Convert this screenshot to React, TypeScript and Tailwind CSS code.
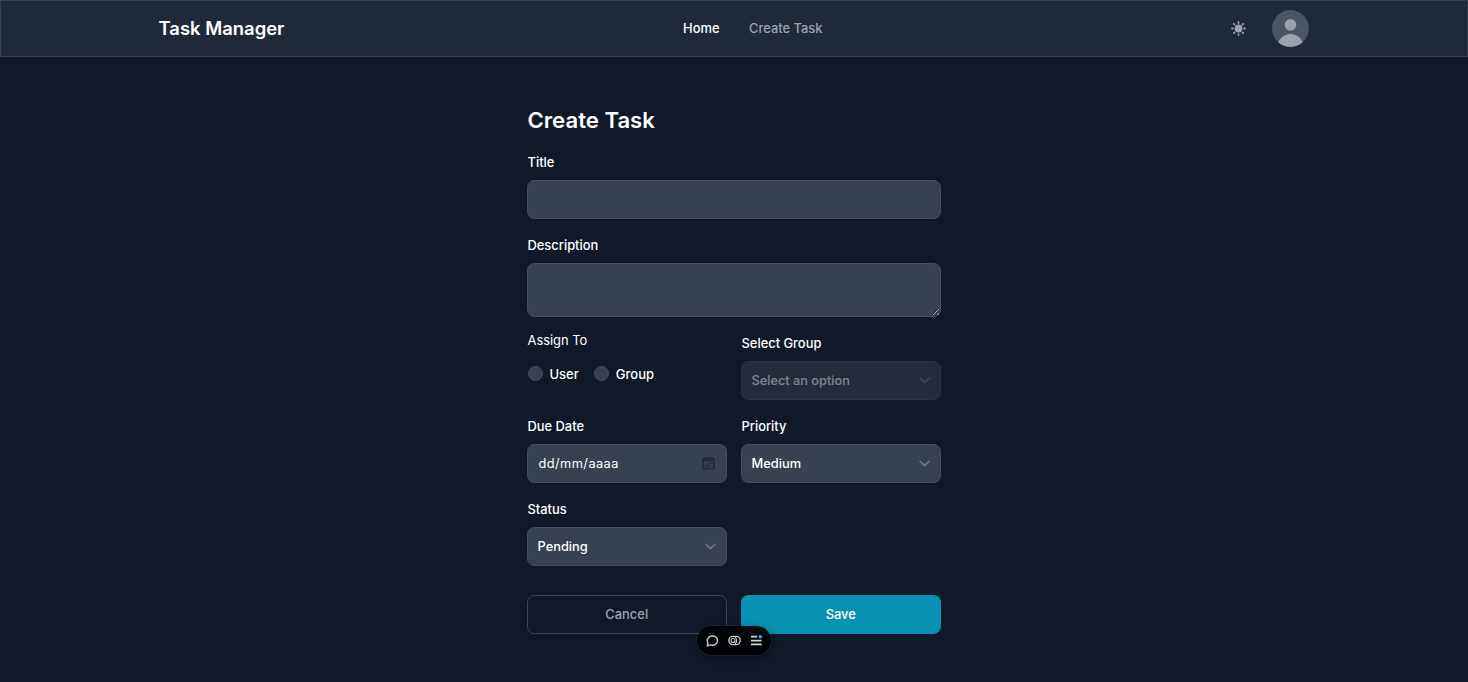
import type { ReactNode } from "react";

const label = "block h-[19px] mb-2 pl-[0.5px] text-[12.9px] leading-[19px] font-medium text-white";
const box =
  "flex h-[38.5px] w-full items-center justify-between rounded-[7.4px] border border-[#474f5e] bg-[#384150] px-[9.5px] text-[12.85px] font-medium text-white";

function Chevron() {
  return (
    <svg className="h-[7px] w-[11px]" viewBox="0 0 10 6" fill="none" stroke="#6b7280" strokeWidth="1.6" strokeLinecap="round" strokeLinejoin="round">
      <path d="m1 1 4 4 4-4" />
    </svg>
  );
}

function Field({ name, children }: { name: string; children: ReactNode }) {
  return (
    <div className="flex-1">
      <span className={label}>{name}</span>
      {children}
    </div>
  );
}

function SelectBox({ value, disabled = false }: { value: string; disabled?: boolean }) {
  return (
    <button type="button" disabled={disabled} className={disabled ? `${box} opacity-50` : box}>
      <span className={disabled ? "text-[12.75px] text-[#ececec]" : ""}>{value}</span>
      <Chevron />
    </button>
  );
}

function Radio({ name }: { name: string }) {
  return (
    <label className="flex items-center gap-[7px] text-[13px] leading-[18px] font-medium text-white">
      <span className="size-[15px] rounded-full border border-[#474f5e] bg-[#384150]" />
      {name}
    </label>
  );
}

function SunIcon() {
  return (
    <svg className="size-[15px]" viewBox="0 0 15 15" fill="#9ca3af">
      <circle cx="7.5" cy="7.5" r="3.9" />
      <g stroke="#9ca3af" strokeWidth="1.8" strokeLinecap="round">
        <path d="M7.5 1v.9M7.5 13.1v.9M1 7.5h.9M13.1 7.5h.9M2.9 2.9l.6.6M11.5 11.5l.6.6M2.9 12.1l.6-.6M11.5 3.5l.6-.6" />
      </g>
    </svg>
  );
}

function CalendarIcon() {
  return (
    <svg className="h-[13px] w-[13px]" viewBox="0 0 13 13" fill="none" stroke="#1b2230">
      <rect x="1" y="1" width="11" height="11" rx="1.2" strokeWidth="1.2" />
      <path d="M1 2.2h11" strokeWidth="1" />
      <path d="M1 4h11" strokeWidth="0.8" />
      <path d="M5.5 6.5h1.1M7.5 6.5h1.1M9.4 6.5h1.1M3.2 8.2h1.2M5.5 8.2h1.1M7.5 8.2h1.1M3.2 9.9h1.2M5.5 9.9h1.1" strokeWidth="1.1" />
    </svg>
  );
}

function Toolbar() {
  return (
    <div className="absolute top-[625.5px] left-[697px] flex h-[29px] w-[73.5px] items-center justify-between rounded-full bg-black/90 pr-[8px] pl-[8.5px] shadow-[0_0_0_1px_rgba(90,100,120,0.15),0_3px_9px_rgba(0,0,0,0.35)]">
      <svg className="size-[13px]" viewBox="0 0 13 13" fill="none" stroke="#c9c9c9" strokeWidth="1.5" strokeLinejoin="round">
        <path d="M1.3 11.9 1.9 8.6A5.1 4.6 0 1 1 4.9 10.9z" />
      </svg>
      <svg className="size-[13px]" viewBox="0 0 13 13" fill="none" stroke="#c9c9c9">
        <rect x="0.9" y="2.4" width="11.3" height="8.2" rx="4.1" strokeWidth="1.4" />
        <circle cx="5" cy="6.5" r="2" strokeWidth="1.1" />
        <path d="M7 2.8c2.1 1.9 2.1 5.5 0 7.4" strokeWidth="1.1" />
      </svg>
      <svg className="size-[13px]" viewBox="0 0 13 13" fill="none" stroke="#d4d4d4" strokeWidth="1.6">
        <path d="M1 2.6h6.2M1 6.6h10.6M1 10.4h10.6" />
        <circle cx="10.3" cy="2.7" r="1.8" fill="#3b9eff" stroke="none" />
      </svg>
    </div>
  );
}

export default function App() {
  return (
    <div className="relative flex h-[682px] flex-col bg-[#111827] font-['Inter',sans-serif]">
      <nav className="grid h-[57px] shrink-0 grid-cols-[1fr_auto_1fr] items-center border border-[#374151] bg-[#1f2937] px-[157.5px]">
        <span className="pb-[2px] text-[18.45px] leading-[26px] font-semibold text-white">Task Manager</span>
        <div className="relative left-[18.75px] flex gap-[29.5px] text-[12.9px] leading-[19px] font-medium">
          <a className="text-white">Home</a>
          <a className="text-[#9ca3af]">Create Task</a>
        </div>
        <div className="flex items-center justify-end gap-[25.5px] pr-[0.6px]">
          <SunIcon />
          <svg className="size-[37px]" viewBox="0 0 37 37">
            <defs>
              <clipPath id="avatar">
                <circle cx="18.5" cy="18.5" r="18.5" />
              </clipPath>
            </defs>
            <g clipPath="url(#avatar)">
              <rect width="37" height="37" fill="#4b5563" />
              <circle cx="18.5" cy="14.8" r="5.8" fill="#9ca3af" />
              <circle cx="18.5" cy="37" r="13" fill="#9ca3af" />
            </g>
          </svg>
        </div>
      </nav>

      <main className="mx-auto w-[414px] pt-[47px] pr-[0.5px]">
        <h1 className="mb-[16px] h-[33px] pl-[0.5px] text-[22.15px] leading-[33px] font-semibold text-white">Create Task</h1>
        <Field name="Title">
          <div className={box} />
        </Field>
        <div className="mt-[17.5px]">
          <Field name="Description">
            <textarea className="block h-[53.5px] w-full rounded-[7.4px] border border-[#474f5e] bg-[#384150]" />
          </Field>
        </div>
        <div className="mt-[14px] flex gap-[14.5px]">
          <div className="flex-1">
            <span className="block pl-[0.5px] text-[12.9px] leading-[19px] text-white">Assign To</span>
            <div className="mt-[15px] flex gap-[15px] pl-[0.5px]">
              <Radio name="User" />
              <Radio name="Group" />
            </div>
          </div>
          <div className="flex-1 pt-[3.5px]">
            <Field name="Select Group">
              <SelectBox value="Select an option" disabled />
            </Field>
          </div>
        </div>
        <div className="mt-[17.5px] flex gap-[14.5px]">
          <Field name="Due Date">
            <div className={box}>
              <span className="pl-px font-normal tracking-[0.4px]">dd/mm/aaaa</span>
              <span className="pr-px">
                <CalendarIcon />
              </span>
            </div>
          </Field>
          <Field name="Priority">
            <SelectBox value="Medium" />
          </Field>
        </div>
        <div className="mt-[17.5px] grid grid-cols-2 gap-[14.5px]">
          <Field name="Status">
            <SelectBox value="Pending" />
          </Field>
        </div>
        <div className="mt-[29.5px] grid grid-cols-2 gap-[14.5px] text-[12.9px] font-medium">
          <button type="button" className="h-[38.5px] rounded-[7.4px] border border-[#3f4858] text-[#9ca3af]">
            Cancel
          </button>
          <button type="button" className="h-[38.5px] rounded-[7.4px] bg-[#0891b2] text-white">
            Save
          </button>
        </div>
      </main>
      <Toolbar />
    </div>
  );
}
